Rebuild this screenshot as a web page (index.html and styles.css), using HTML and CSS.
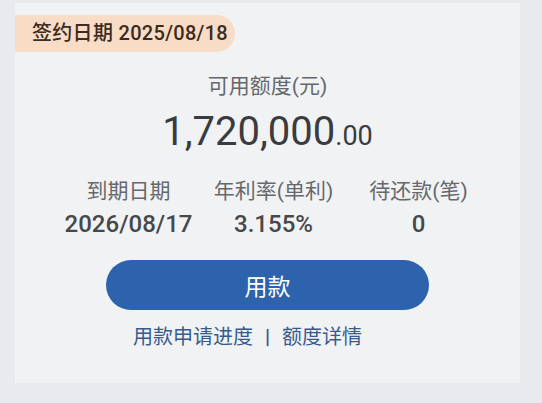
FILE: index.html
```html
<!DOCTYPE html>
<html>
<head>
    <meta charset="UTF-8">
    <title>额度</title>
    <link rel="stylesheet" href="styles.css">
</head>
<body>
    <div class="card">
        <div class="tag">签约日期 2025/08/18</div>
        <div class="limit-title">可用额度(元)</div>
        <div class="amount">1,720,000<span class="cents">.00</span></div>
        <div class="stats">
            <div class="stat">
                <div class="stat-label">到期日期</div>
                <div class="stat-value">2026/08/17</div>
            </div>
            <div class="stat">
                <div class="stat-label">年利率(单利)</div>
                <div class="stat-value">3.155%</div>
            </div>
            <div class="stat">
                <div class="stat-label">待还款(笔)</div>
                <div class="stat-value">0</div>
            </div>
        </div>
        <button class="use-btn">用款</button>
        <div class="links">
            <a class="link-left" href="#">用款申请进度</a>
            <span class="sep">|</span>
            <a class="link-right" href="#">额度详情</a>
        </div>
    </div>
</body>
</html>
```

FILE: styles.css
```css
body {
    margin: 0;
    padding: 3px 0 0 15px;
    background: #e8eaed;
    font-family: Roboto, "Noto Sans CJK SC", sans-serif;
    height: 400px;
    overflow: hidden;
}

.card {
    width: 505px;
    height: 380px;
    background: #f0f2f4;
    display: flex;
    flex-direction: column;
    align-items: center;
    box-sizing: border-box;
    padding-top: 12px;
}

.tag {
    align-self: flex-start;
    width: 220px;
    box-sizing: border-box;
    height: 37px;
    line-height: 37px;
    padding-left: 17px;
    background: #f8dcc6;
    color: #3b2b20;
    font-size: 20px;
    font-weight: 500;
    letter-spacing: 0.3px;
    border-radius: 0 19px 19px 0;
    white-space: nowrap;
}

.limit-title {
    margin-top: 20px;
    font-size: 21px;
    line-height: 28px;
    color: #64676c;
}

.amount {
    margin-top: 8px;
    font-size: 40px;
    line-height: 48px;
    color: #3a3b3e;
}

.cents {
    font-size: 27px;
}

.stats {
    align-self: stretch;
    margin-top: 17px;
    display: grid;
    grid-template-columns: repeat(3, 145px);
    padding-left: 41px;
}

.stat {
    display: flex;
    flex-direction: column;
    align-items: center;
}

.stat-label {
    font-size: 21px;
    line-height: 28px;
    color: #66686c;
    white-space: nowrap;
}

.stat-value {
    margin-top: 4px;
    font-size: 24px;
    line-height: 30px;
    font-weight: 500;
    color: #46484c;
}

.use-btn {
    margin-top: 21px;
    width: 323px;
    height: 50px;
    border: none;
    border-radius: 25px;
    background: #2d62ad;
    color: #fff;
    font-family: inherit;
    font-size: 23px;
}

.links {
    align-self: stretch;
    margin-top: 13px;
    display: grid;
    grid-template-columns: 1fr auto 1fr;
    gap: 12px;
    font-size: 20px;
    line-height: 28px;
    color: #395a8d;
}

.links a {
    color: #395a8d;
    text-decoration: none;
}

.sep {
    font-weight: 700;
}

.link-left {
    text-align: right;
}

.link-right {
    text-align: left;
}
```
